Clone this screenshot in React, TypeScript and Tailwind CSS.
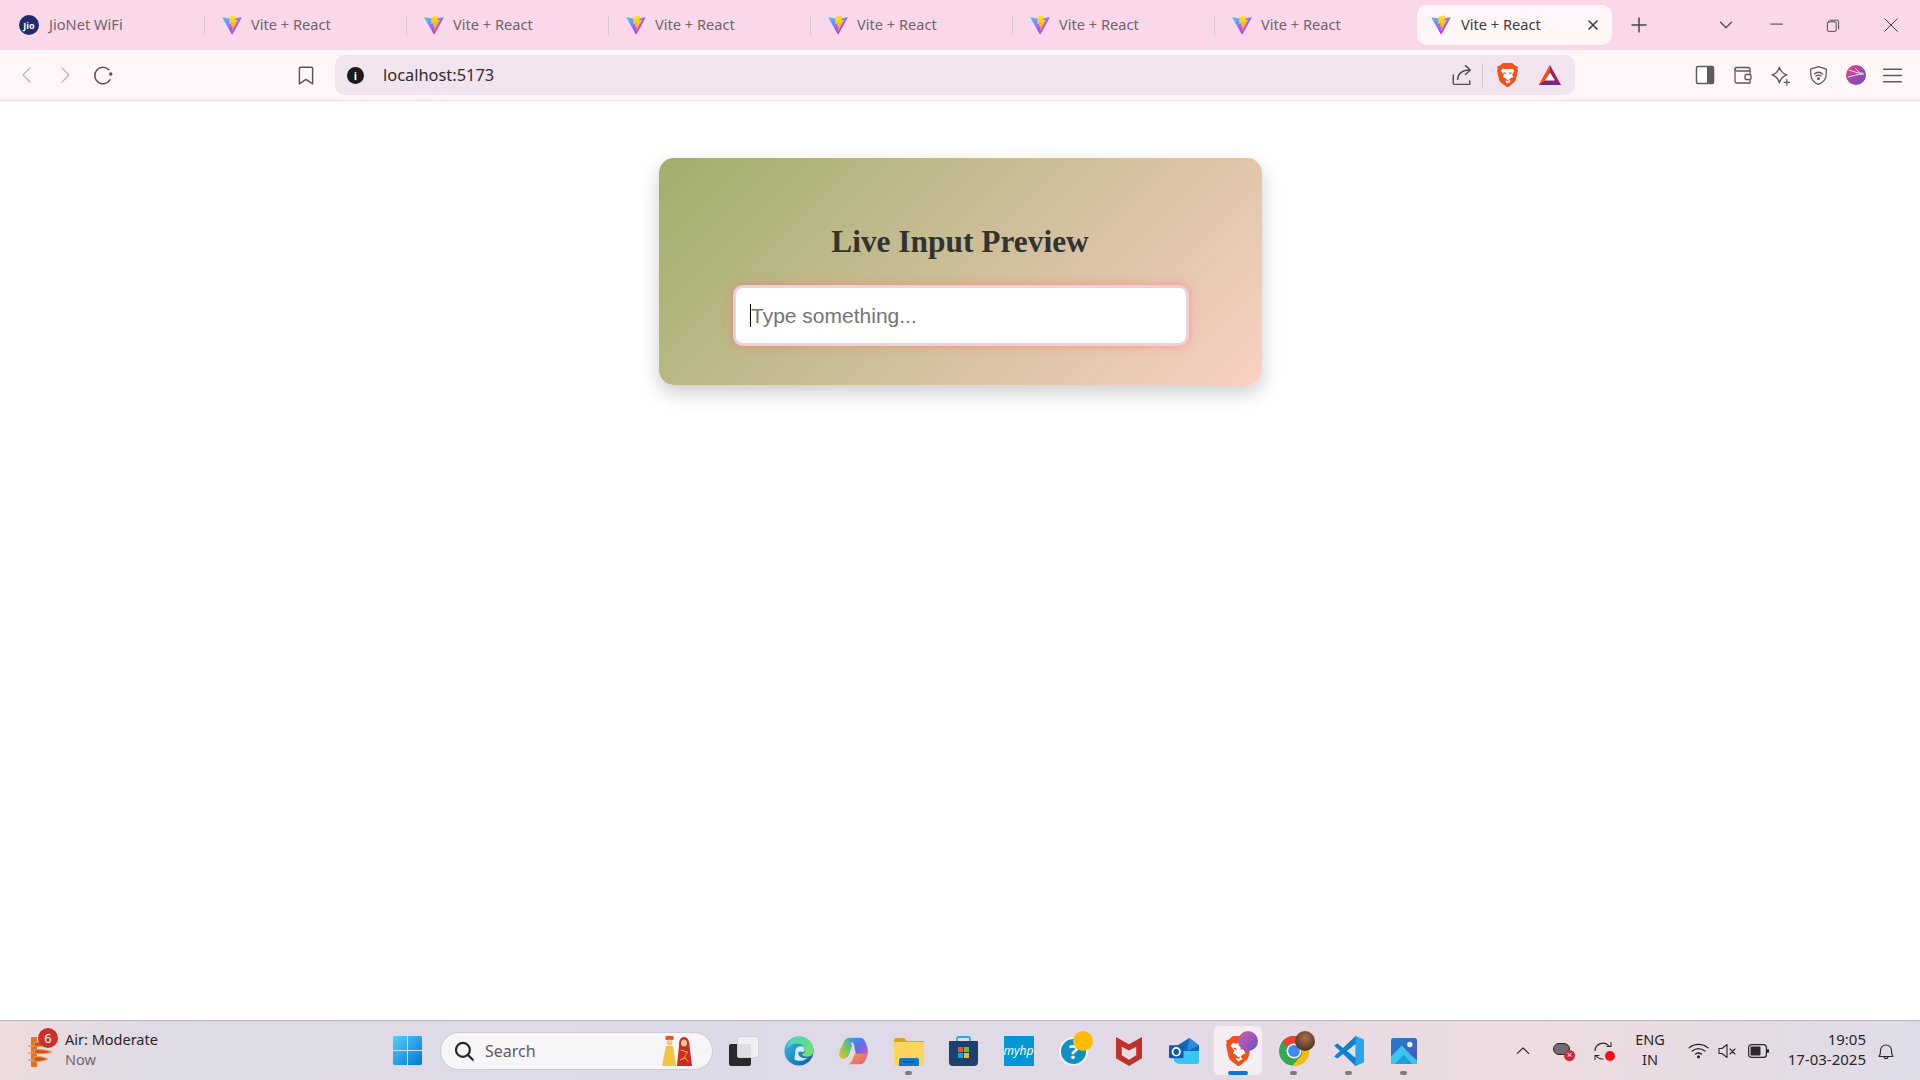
import React from "react";

const sans = "font-['Noto_Sans','Open_Sans',sans-serif]";

function Vite({ className = "w-[20px] h-[20px]" }: { className?: string }) {
  return (
    <svg viewBox="0 0 410 404" className={className}>
      <defs>
        <linearGradient id="va" x1="6" y1="33" x2="235" y2="344" gradientUnits="userSpaceOnUse">
          <stop stopColor="#41D1FF" />
          <stop offset="1" stopColor="#BD34FE" />
        </linearGradient>
        <linearGradient id="vb" x1="194.651" y1="8.81818" x2="236.076" y2="292.989" gradientUnits="userSpaceOnUse">
          <stop stopColor="#FFEA83" />
          <stop offset="0.08" stopColor="#FFDD35" />
          <stop offset="1" stopColor="#FFA800" />
        </linearGradient>
      </defs>
      <path d="M399.641 59.5246L215.643 388.545C211.844 395.338 202.084 395.378 198.228 388.618L10.5817 59.5563C6.38087 52.1896 12.6802 43.2665 21.0281 44.7586L205.223 77.6824C206.398 77.8924 207.601 77.8904 208.776 77.6763L389.119 44.8058C397.439 43.2894 403.768 52.1434 399.641 59.5246Z" fill="url(#va)" />
      <path d="M292.965 1.5744L156.801 28.2552C154.563 28.6937 152.906 30.5903 152.771 32.8664L144.395 174.33C144.198 177.662 147.258 180.248 150.51 179.498L188.42 170.749C191.967 169.931 195.172 173.055 194.443 176.622L183.18 231.775C182.422 235.487 185.907 238.661 189.532 237.56L212.947 230.446C216.577 229.344 220.065 232.527 219.297 236.242L201.398 322.875C200.278 328.294 207.486 331.249 210.492 326.603L212.5 323.5L323.454 102.072C325.312 98.3645 322.108 94.137 318.036 94.9228L279.014 102.454C275.347 103.161 272.227 99.746 273.262 96.1583L298.731 7.86689C299.767 4.27314 296.636 0.855181 292.965 1.5744Z" fill="url(#vb)" />
    </svg>
  );
}

function Tab({ sep = true }: { sep?: boolean }) {
  return (
    <div className="w-[202px] h-full flex items-center relative shrink-0">
      <div className="ml-[17px] w-[20px] flex justify-center"><Vite /></div>
      <span className="ml-[9px] text-[14.6px] text-[#6f656b] whitespace-nowrap">Vite + React</span>
      {sep && <div className="absolute right-0 top-[15px] h-[20px] w-px bg-[#d9c6d2]" />}
    </div>
  );
}

function Stroke({ size = 20, sw = 1.4, color = "#5f5a5e", children }: { size?: number; sw?: number; color?: string; children: React.ReactNode }) {
  return (
    <svg width={size} height={size} viewBox="0 0 20 20" fill="none" stroke={color} strokeWidth={sw} strokeLinecap="round" strokeLinejoin="round">
      {children}
    </svg>
  );
}

function BraveLogo({ w = 22, h = 24 }: { w?: number; h?: number }) {
  return (
    <svg width={w} height={h} viewBox="3 2 18 20" preserveAspectRatio="none">
      <path d="M5 4.500 8 2h8l3 2.500 2 .5-.6 1.600.6 1.600-1.800 7.600c-.3 1.200-1 2-2 2.700L12.500 22h-1L6.800 18.600c-1-.7-1.700-1.500-2-2.700L3 8.200l.6-1.600L3 5z" fill="#f1521c" />
      <path d="M8 6.500c1.300.5 2.600.7 4 .2 1.400.5 2.700.3 4-.2l1.800 2-1.800 3.200 1 2-2.500 1-1 1.300 1.500 1.400L12 19l-2-1.600 1.500-1.400-1-1.300-2.500-1 1-2L6.200 8.500z" fill="#fff" />
      <path d="M10.700 16h2.600L12 17.500z" fill="#f1521c" />
      <path d="M8.500 10.200l2 .5M15.500 10.200l-2 .5" stroke="#f1521c" strokeWidth="1" />
    </svg>
  );
}

function Bat() {
  return (
    <svg width="24" height="22" viewBox="0 0 24 22">
      <path d="M12 1 23 21H1z" fill="#9e1f63" />
      <path d="M12 1 1 21l6-4 5-10z" fill="#ff5000" />
      <path d="M1 21h22l-5-4H7z" fill="#662d91" />
      <path d="M12 8.500 17 16.500H7z" fill="#fff" />
    </svg>
  );
}

function TaskSlot({ children, dot, active }: { children: React.ReactNode; dot?: boolean; active?: boolean }) {
  return (
    <div className="w-[55px] h-full flex items-center justify-center relative shrink-0">
      {active && <div className="absolute left-[3px] top-[5px] w-[48px] h-[49px] rounded-[5px] bg-[#f4eef2]" />}
      <div className="relative flex items-center justify-center">{children}</div>
      {dot && <div className="absolute left-[24px] top-[50px] w-[7px] h-[4px] rounded-full bg-[#7c7a7e]" />}
      {active && <div className="absolute left-[17px] top-[50px] w-[20px] h-[4px] rounded-full bg-[#0a78d4]" />}
    </div>
  );
}

function Edge() {
  return (
    <svg width="30" height="30" viewBox="0 0 32 32">
      <defs>
        <linearGradient id="e1" x1="0" y1="0" x2="1" y2="1">
          <stop stopColor="#35c1f1" />
          <stop offset="1" stopColor="#0c59a4" />
        </linearGradient>
        <linearGradient id="e2" x1="0" y1="0" x2="1" y2="1">
          <stop stopColor="#3dd6c8" />
          <stop offset="1" stopColor="#86e25a" />
        </linearGradient>
      </defs>
      <circle cx="16" cy="16" r="15.500" fill="url(#e1)" />
      <path d="M16 .5C24 .5 31.500 7 31.500 15.500c0 4-3 6.500-7 6.500-2.500 0-5-1-5.500-2.500 3-1 3.500-3 3.500-4.500C22.500 11 18 8 13.500 8 9 8 6 10 3 14 4 6 9 .5 16 .5z" fill="url(#e2)" />
      <path d="M12 17c0-4 3-6 6-6 3 0 4 2 4 3.500 0 1-.5 2-1.500 2.500-2 0-3-.5-3.500-.500-1.500 0-2.500 1.500-1.500 3.500 1 2.500 5 4.500 9.500 3.500-2 2-5 3-8 3-3 0-5.500-1.500-5.500-1.500C10.500 24.500 12 21 12 17z" fill="#e7f5fb" fillOpacity="0.9" />
    </svg>
  );
}

function Copilot() {
  return (
    <svg width="29" height="28" viewBox="0 0 31 35" preserveAspectRatio="none">
      <defs>
        <linearGradient id="c1" x1="0" y1="0" x2="1" y2="1">
          <stop stopColor="#3aa9e6" />
          <stop offset="0.5" stopColor="#5b6ee6" />
          <stop offset="1" stopColor="#c55fd0" />
        </linearGradient>
        <linearGradient id="c2" x1="0" y1="1" x2="1" y2="0">
          <stop stopColor="#f5c02e" />
          <stop offset="0.5" stopColor="#7cc55a" />
          <stop offset="1" stopColor="#37a8dc" />
        </linearGradient>
        <linearGradient id="c3" x1="0" y1="0" x2="1" y2="1">
          <stop stopColor="#f8a13c" />
          <stop offset="1" stopColor="#e25a8c" />
        </linearGradient>
      </defs>
      <path d="M10 1h12c3 0 5 2 6 5 2 5 3 9 3 13-2 4-8 4-13 3L16 9c-1-3-4-3-5 0z" fill="url(#c1)" />
      <path d="M10 1C7 2 6 4 5 7 3 12 0 17 0 22c0 4 3 6 6 5 3-1 4-3 5-6l3-10z" fill="url(#c2)" />
      <path d="M31 19c-1 7-3 15-9 15H10c3-1 4-4 5-8l2-5h7c3 0 6 0 7-2z" fill="url(#c3)" />
    </svg>
  );
}

function Folder() {
  return (
    <svg width="30" height="28" viewBox="0 0 30 28" className="mt-[2px]">
      <path d="M0 2a2 2 0 0 1 2-2h8l3 3h17v3H0z" fill="#d9a420" />
      <rect x="0" y="4" width="30" height="24" rx="1" fill="#fcd65c" />
      <path d="M5 28v-6a2 2 0 0 1 2-2h16a2 2 0 0 1 2 2v6z" fill="#0f78c8" />
      <rect x="9" y="23" width="12" height="1.500" fill="#0a4f8a" />
    </svg>
  );
}

function Store() {
  return (
    <svg width="29" height="30" viewBox="0 0 29 30">
      <path d="M8 7V2.500A1.500 1.500 0 0 1 9.500 1h10A1.500 1.500 0 0 1 21 2.500V7" fill="none" stroke="#26a9e0" strokeWidth="1.800" />
      <path d="M0 5h29v21a4 4 0 0 1-4 4H4a4 4 0 0 1-4-4z" fill="#1b4170" />
      <rect x="9" y="11" width="5" height="5" fill="#e8562a" />
      <rect x="15" y="11" width="5" height="5" fill="#79b829" />
      <rect x="9" y="17" width="5" height="5" fill="#13a5e8" />
      <rect x="15" y="17" width="5" height="5" fill="#fcb814" />
    </svg>
  );
}

function Mcafee() {
  return (
    <svg width="26" height="30" viewBox="0 0 27 31" preserveAspectRatio="none">
      <path d="M0 1l6 3.500 7.500 4 7.500-4L27 1v22l-13.500 8L0 23z" fill="#c0302c" />
      <path d="M6 11l7.500 4 7.500-4v9l-7.500 4.500L6 20z" fill="#e6dde2" />
    </svg>
  );
}

function Outlook() {
  return (
    <svg width="30" height="26" viewBox="0 0 31 32" preserveAspectRatio="none">
      <path d="M9 9 21 0l10 9v14H9z" fill="#0f6cbd" />
      <path d="M21 0l10 9-12 7z" fill="#2a8ee0" />
      <path d="M5 16h26v13a3 3 0 0 1-3 3H11a6 6 0 0 1-6-6z" fill="#35c6f4" />
      <rect x="0" y="9" width="15" height="16" rx="1.500" fill="#0f5aa8" />
      <ellipse cx="7.500" cy="17" rx="3.800" ry="4.800" fill="none" stroke="#fff" strokeWidth="2" />
    </svg>
  );
}

function Chrome() {
  return (
    <svg width="30" height="30" viewBox="0 0 32 32">
      <circle cx="16" cy="16" r="16" fill="#34a853" />
      <path d="M16 0a16 16 0 0 1 13.900 8H16a8 8 0 0 0-7 4L3.300 6.200A16 16 0 0 1 16 0z" fill="#ea4335" />
      <path d="M29.900 8A16 16 0 0 1 14 31.900L21 24a8 8 0 0 0 2-12l-3-4z" fill="#fbbc04" />
      <circle cx="16" cy="16" r="8" fill="#fff" />
      <circle cx="16" cy="16" r="6.300" fill="#4285f4" />
    </svg>
  );
}

function VSCode() {
  return (
    <svg width="30" height="30" viewBox="0 0 30 30">
      <path d="M21.500 0 30 4v22l-8.500 4L9 18l-5.500 4.500L0 20.500 6 15 0 9.500 3.500 7.500 9 12z" fill="#0f7fce" />
      <path d="M21.500 0 30 4v22l-8.500 4z" fill="#28a4ec" />
      <path d="M21.500 8 13 15l8.500 7z" fill="#dfe0ea" />
    </svg>
  );
}

function Photos() {
  return (
    <svg width="26" height="26" viewBox="0 0 29 28" preserveAspectRatio="none">
      <defs>
        <linearGradient id="p1" x1="0" y1="0" x2="1" y2="1">
          <stop stopColor="#1f7fd0" />
          <stop offset="1" stopColor="#5a52b5" />
        </linearGradient>
      </defs>
      <rect width="29" height="28" rx="2.500" fill="url(#p1)" />
      <circle cx="21" cy="7" r="3" fill="#f2f0fa" />
      <path d="M0 20 12 8l11 11 6 5v2a2 2 0 0 1-2 2H2a2 2 0 0 1-2-2z" fill="#3cc5ee" />
      <path d="M4 28 14 18l10 10z" fill="#1ea0dc" />
    </svg>
  );
}

function Weather() {
  return (
    <svg width="26" height="32" viewBox="0 0 26 32">
      <path d="M4 2h6v30H4z" fill="#e8701e" />
      <path d="M7 8c6-2 12-1 16 1-4 2-10 3-16 2zM7 15c6-1 13 0 18 2-5 2-12 2-18 1zM7 22c5-1 10 0 14 2-4 2-9 3-14 2z" fill="#c65815" stroke="#f09a55" strokeWidth="1" />
      <path d="M1 11h5M1 18h5M1 25h5" stroke="#f09a55" strokeWidth="1.500" />
    </svg>
  );
}

function Couple() {
  return (
    <svg width="32" height="30" viewBox="0 0 32 30">
      <rect x="4.500" y="0" width="8" height="4" rx="1" fill="#e0551e" />
      <circle cx="8.500" cy="6.500" r="3" fill="#f3c79c" />
      <path d="M5 10h7l3 20H1z" fill="#efc53f" />
      <path d="M23 1c4 0 5.500 4 5.500 9L31 30H16l2-20c0-5 1-9 5-9z" fill="#cf2a24" />
      <ellipse cx="23" cy="7" rx="3" ry="3.500" fill="#f3c79c" />
      <path d="M19.500 14l7 2-3 5 4 5M19 24l5-2" stroke="#f2c230" strokeWidth="1" fill="none" />
    </svg>
  );
}

export default function App() {
  return (
    <div className={`w-[1920px] h-[1080px] flex flex-col overflow-hidden bg-white ${sans}`}>
      {/* Tab strip */}
      <div className="h-[50px] shrink-0 bg-[#fad8ea] flex items-center pl-[3px]">
        <div className="w-[202px] h-full flex items-center relative shrink-0">
          <div className="ml-[16px] w-[20px] h-[20px] rounded-full bg-[#1e2b6f] flex items-center justify-center text-white text-[9px] font-bold leading-none">Jio</div>
          <span className="ml-[10px] text-[14.6px] text-[#6f656b] whitespace-nowrap">JioNet WiFi</span>
          <div className="absolute right-0 top-[15px] h-[20px] w-px bg-[#d9c6d2]" />
        </div>
        <Tab />
        <Tab />
        <Tab />
        <Tab />
        <Tab />
        <Tab sep={false} />
        <div className="w-[195px] h-[40px] rounded-[10px] bg-[#fff6f7] flex items-center shrink-0">
          <div className="ml-[14px] w-[20px] flex justify-center"><Vite /></div>
          <span className="ml-[10px] text-[14.6px] text-[#3f3b3e] whitespace-nowrap">Vite + React</span>
          <div className="ml-auto mr-[11px]">
            <Stroke size={16} sw={2} color="#3f3b3e"><path d="M5 5l10 10M15 5 5 15" /></Stroke>
          </div>
        </div>
        <div className="ml-[12px] w-[30px] flex justify-center shrink-0">
          <Stroke size={20} sw={1.5} color="#4a4649"><path d="M10 3v14M3 10h14" /></Stroke>
        </div>
        <div className="ml-[56px] w-[32px] flex justify-center shrink-0">
          <Stroke size={18} sw={1.6} color="#5a5559"><path d="M4 7l6 6 6-6" /></Stroke>
        </div>
        <div className="ml-[12px] w-[46px] flex justify-center shrink-0">
          <Stroke size={18} sw={1.1} color="#3f3b3e"><path d="M3 9h13" /></Stroke>
        </div>
        <div className="ml-[10px] w-[46px] flex justify-center shrink-0">
          <Stroke size={16} sw={1.1} color="#3f3b3e"><rect x="3" y="6" width="11" height="12" rx="1.500" /><path d="M6 4h8.500A2 2 0 0 1 17 6v9" /></Stroke>
        </div>
        <div className="ml-[12px] w-[46px] flex justify-center shrink-0">
          <Stroke size={18} sw={1.1} color="#3f3b3e"><path d="M3 3l14 14M17 3 3 17" /></Stroke>
        </div>
      </div>

      {/* Toolbar */}
      <div className="h-[51px] shrink-0 bg-[#fff6f7] border-b border-[#f3dfe4] flex items-center pl-[8px]">
        <div className="w-[38px] flex justify-center">
          <Stroke size={20} sw={1.2} color="#b8b3b6"><path d="M13 3 6 10l7 7" /></Stroke>
        </div>
        <div className="w-[38px] flex justify-center">
          <Stroke size={20} sw={1.2} color="#b8b3b6"><path d="M7 3l7 7-7 7" /></Stroke>
        </div>
        <div className="w-[37px] flex justify-center">
          <Stroke size={22} sw={1.4} color="#5a5559">
            <path d="M15.300 5.200A7.500 7.500 0 1 0 16.500 14.200" />
            <circle cx="17" cy="9" r="0.900" fill="#5a5559" />
          </Stroke>
        </div>
        <div className="ml-[166px] w-[38px] flex justify-center">
          <Stroke size={22} sw={1.3} color="#5a5559"><path d="M5 3h10a1 1 0 0 1 1 1v14l-6-4-6 4V4a1 1 0 0 1 1-1z" /></Stroke>
        </div>
        <div className="ml-[10px] w-[1240px] h-[40px] rounded-[10px] bg-[#f1e4ee] flex items-center shrink-0">
          <div className="ml-[12px] w-[17px] h-[17px] rounded-full bg-[#1c1a1c] flex items-center justify-center text-white text-[11px] font-bold leading-none">i</div>
          <span className="ml-[19px] text-[16.4px] text-[#2f2c2e] whitespace-nowrap">localhost:5173</span>
          <div className="ml-auto">
            <Stroke size={22} sw={1.3} color="#4f4a4d">
              <path d="M3 10v7.500a1 1 0 0 0 1 1h14v-3" />
              <path d="M7 14c0-5 4-8.500 11-8.500M14 1.500l4.500 4-4.500 4" />
            </Stroke>
          </div>
          <div className="ml-[10px] w-px h-[24px] bg-[#cfc5cc]" />
          <div className="ml-[14px] flex"><BraveLogo w={21} h={24} /></div>
          <div className="ml-[20px] mr-[13px] flex"><Bat /></div>
        </div>
        <div className="ml-[111px] w-[38px] flex justify-center shrink-0">
          <svg width="20" height="20" viewBox="0 0 20 20">
            <rect x="1.500" y="1.500" width="17" height="17" rx="1.500" fill="#fff" stroke="#5f5a5e" strokeWidth="1.500" />
            <rect x="12" y="1.500" width="6.500" height="17" fill="#5f5a5e" />
          </svg>
        </div>
        <div className="w-[37px] flex justify-center shrink-0">
          <Stroke size={20} sw={1.3}>
            <path d="M17 6H4a2 2 0 0 1-2-2 1.500 1.500 0 0 1 1.500-1.500H15a2 2 0 0 1 2 2z" />
            <path d="M2 4v12a2 2 0 0 0 2 2h13V6" />
            <rect x="12" y="9.500" width="6" height="5" rx="1" fill="#fff6f7" />
          </Stroke>
        </div>
        <div className="w-[38px] flex justify-center shrink-0">
          <Stroke size={21} sw={1.3}>
            <path d="M9 2c1 4 3 6 7 7.500-4 1.500-6 3.500-7 7.500-1-4-3-6-7-7.500C6 8 8 6 9 2z" />
            <path d="M16 14v5M13.500 16.500h5" />
          </Stroke>
        </div>
        <div className="w-[38px] flex justify-center shrink-0">
          <Stroke size={21} sw={1.2}>
            <path d="M10 1.500 17.500 4c0 7 0 11-7.500 14.500C2.500 15 2.500 11 2.500 4z" />
            <path d="M6 8.500c2.500-2 5.500-2 8 0M7.500 10.500c1.500-1 3.500-1 5 0" />
            <circle cx="10" cy="13" r="0.800" fill="#5f5a5e" />
          </Stroke>
        </div>
        <div className="w-[37px] flex justify-center shrink-0">
          <svg width="20" height="20" viewBox="0 0 20 20">
            <defs>
              <linearGradient id="av" x1="0" y1="0" x2="1" y2="1">
                <stop stopColor="#f0427a" />
                <stop offset="1" stopColor="#5a4fd6" />
              </linearGradient>
            </defs>
            <circle cx="10" cy="10" r="10" fill="url(#av)" />
            <path d="M3 5c4 1 9 4 14 3M9 3l6 6M2 12c5-1 10-3 16-3" stroke="#fff" strokeWidth="1" fill="none" opacity="0.85" />
          </svg>
        </div>
        <div className="w-[37px] flex justify-center shrink-0">
          <Stroke size={21} sw={1.3}><path d="M1.500 4h17M1.500 10h17M1.500 16h17" /></Stroke>
        </div>
      </div>

      {/* Page */}
      <div className="flex-1 bg-white flex justify-center items-start pt-[57px]">
        <div className="w-[603px] h-[227px] rounded-[15px] bg-[linear-gradient(135deg,#a0ae6c,#fad0c4)] shadow-[0_8px_20px_rgba(0,0,0,0.2)] flex flex-col items-center pt-[65px]">
          <h1 className="font-['Liberation_Serif',serif] font-bold text-[31.4px] leading-[37px] text-[#333333]">Live Input Preview</h1>
          <div className="relative mt-[25px] ml-[2px] w-[456px] h-[61px]">
            <input
              type="text"
              placeholder="Type something..."
              className="w-full h-full rounded-[10px] bg-white border-[3px] border-[#efcfdc] pl-[15px] pr-[15px] font-['Liberation_Sans',Arial,sans-serif] text-[21px] outline-none caret-transparent shadow-[0_0_10px_rgba(255,107,107,0.5)] placeholder:text-[#757575]"
            />
            <div className="absolute left-[17px] top-[19px] w-px h-[23px] bg-black" />
          </div>
        </div>
      </div>

      {/* Taskbar */}
      <div className="h-[60px] shrink-0 border-t border-[#bdb8be] bg-[linear-gradient(90deg,#eddcdc_0%,#dedbe6_8%,#dcdae6_35%,#e2d9e6_60%,#ecdcdf_78%,#eddcdf_80%,#dedbe8_100%)] flex items-center">
        <div className="w-[380px] h-full flex items-center shrink-0 relative">
          <div className="ml-[27px] flex"><Weather /></div>
          <div className="absolute left-[38px] top-[7px] w-[20px] h-[20px] rounded-full bg-[#cc2f26] text-white text-[13px] leading-[20px] text-center">6</div>
          <div className="ml-[12px] flex flex-col -mt-[4px]">
            <span className="text-[14.5px] leading-[20px] text-[#29272a] whitespace-nowrap">Air: Moderate</span>
            <span className="text-[14.5px] leading-[20px] text-[#6c686d]">Now</span>
          </div>
        </div>
        <div className="w-[54px] flex justify-center shrink-0">
          <svg width="29" height="29" viewBox="0 0 29 29">
            <defs>
              <linearGradient id="w1" x1="0" y1="0" x2="1" y2="1">
                <stop stopColor="#53cdfa" />
                <stop offset="1" stopColor="#0476d4" />
              </linearGradient>
            </defs>
            <path d="M0 1.500A1.500 1.500 0 0 1 1.500 0H14v14H0zM15 0h12.500A1.500 1.500 0 0 1 29 1.500V14H15zM0 15h14v14H1.500A1.500 1.500 0 0 1 0 27.500zM15 15h14v12.500a1.500 1.500 0 0 1-1.500 1.500H15z" fill="url(#w1)" />
          </svg>
        </div>
        <div className="ml-[6px] w-[273px] h-[38px] rounded-full bg-[#f7f5f8] border border-[#cfcbd2] flex items-center shrink-0">
          <div className="ml-[12px] flex">
            <Stroke size={22} sw={2} color="#29272a"><circle cx="9" cy="9" r="6.300" /><path d="M13.500 13.500 18 18" /></Stroke>
          </div>
          <span className="ml-[10px] text-[16px] text-[#5e5a5f]">Search</span>
          <div className="ml-auto mr-[19px] flex"><Couple /></div>
        </div>
        <div className="ml-[3px] w-[55px] flex justify-center shrink-0">
          <div className="relative w-[30px] h-[30px]">
            <div className="absolute left-0 bottom-0 w-[22px] h-[22px] rounded-[2px] bg-[#2b292b]" />
            <div className="absolute right-0 top-0 w-[22px] h-[22px] rounded-[2px] bg-[#f2eff3]/90 border border-[#d5d1d8]" />
          </div>
        </div>
        <TaskSlot><Edge /></TaskSlot>
        <TaskSlot><Copilot /></TaskSlot>
        <TaskSlot dot><Folder /></TaskSlot>
        <TaskSlot><Store /></TaskSlot>
        <TaskSlot>
          <div className="w-[30px] h-[30px] bg-[#0096d6] flex items-center justify-center text-white text-[12px] italic leading-none">myhp</div>
        </TaskSlot>
        <TaskSlot>
          <div className="relative w-[29px] h-[29px] mt-[2px] rounded-full bg-[#0f8fc4] border-2 border-[#e9f3f8] text-white text-[20px] font-bold leading-[25px] text-center">
            ?
            <div className="absolute -right-[7px] -top-[8px] w-[20px] h-[20px] rounded-full bg-[#fdbd05]" />
          </div>
        </TaskSlot>
        <TaskSlot><Mcafee /></TaskSlot>
        <TaskSlot><Outlook /></TaskSlot>
        <TaskSlot active>
          <BraveLogo w={25} h={30} />
          <div className="absolute -right-[7px] -top-[5px] w-[20px] h-[20px] rounded-full bg-[linear-gradient(135deg,#d45ca8,#6a52c9)]" />
        </TaskSlot>
        <TaskSlot dot>
          <Chrome />
          <div className="absolute -right-[6px] -top-[5px] w-[20px] h-[20px] rounded-full bg-[radial-gradient(circle_at_50%_35%,#a5714f,#3a1f14)]" />
        </TaskSlot>
        <TaskSlot dot><VSCode /></TaskSlot>
        <TaskSlot dot><Photos /></TaskSlot>

        <div className="ml-[79px] w-[26px] flex justify-center shrink-0">
          <Stroke size={16} sw={1.5} color="#29272a"><path d="M3 13l7-7 7 7" /></Stroke>
        </div>
        <div className="ml-[14px] w-[26px] flex justify-center shrink-0">
          <div className="relative w-[20px] h-[16px]">
            <div className="absolute left-0 top-0 w-[17px] h-[12px] rounded-full bg-[#6f6c70] border border-[#29272a]" />
            <div className="absolute right-[-2px] bottom-[-2px] w-[11px] h-[11px] rounded-full bg-[#d2293a] text-white text-[9px] leading-[10px] text-center">×</div>
          </div>
        </div>
        <div className="ml-[14px] w-[26px] flex justify-center shrink-0 relative">
          <Stroke size={20} sw={1.1} color="#29272a">
            <path d="M2 9.500A8 8 0 0 1 16 5M18 1.500V5.500h-4M2 18.500v-4h4M3 14.500a8 8 0 0 0 7 3.500" />
          </Stroke>
          <div className="absolute right-[1px] bottom-0 w-[10px] h-[10px] rounded-full bg-[#f40d16]" />
        </div>
        <div className="ml-[16px] w-[36px] flex flex-col items-center text-[14.5px] leading-[20px] text-[#29272a] shrink-0 -mt-[3px]">
          <span>ENG</span>
          <span>IN</span>
        </div>
        <div className="ml-[19px] w-[22px] flex justify-center shrink-0">
          <Stroke size={21} sw={1.2} color="#29272a">
            <path d="M1 7.500c5-4.500 13-4.500 18 0M4 10.500c3.500-3 8.500-3 12 0M7 13.500c2-1.500 4-1.500 6 0" />
            <circle cx="10" cy="16" r="0.900" fill="#29272a" />
          </Stroke>
        </div>
        <div className="ml-[7px] w-[22px] flex justify-center shrink-0">
          <Stroke size={20} sw={1.1} color="#29272a">
            <path d="M2 7.500v5h3l5 4V3.500l-5 4zM13 8l5 5M18 8l-5 5" />
          </Stroke>
        </div>
        <div className="ml-[9px] w-[22px] flex justify-center shrink-0">
          <svg width="21" height="14" viewBox="0 0 21 14">
            <rect x="0.600" y="0.600" width="17.800" height="12.800" rx="3" fill="none" stroke="#29272a" strokeWidth="1.200" />
            <rect x="2.500" y="2.500" width="10" height="9" rx="1" fill="#29272a" />
            <rect x="19" y="5" width="2" height="4" rx="1" fill="#29272a" />
          </svg>
        </div>
        <div className="ml-[8px] w-[89px] flex flex-col items-end text-[15px] leading-[20px] text-[#29272a] shrink-0 -mt-[4px]">
          <span>19:05</span>
          <span className="whitespace-nowrap">17-03-2025</span>
        </div>
        <div className="ml-[10px] w-[20px] flex justify-center shrink-0">
          <Stroke size={20} sw={1.1} color="#29272a">
            <path d="M3 15.500c1.500-1.500 1.500-3 1.500-6a5.500 5.500 0 0 1 11 0c0 3 0 4.500 1.500 6zM8 15.500a2 2 0 0 0 4 0" />
          </Stroke>
        </div>
      </div>
    </div>
  );
}
